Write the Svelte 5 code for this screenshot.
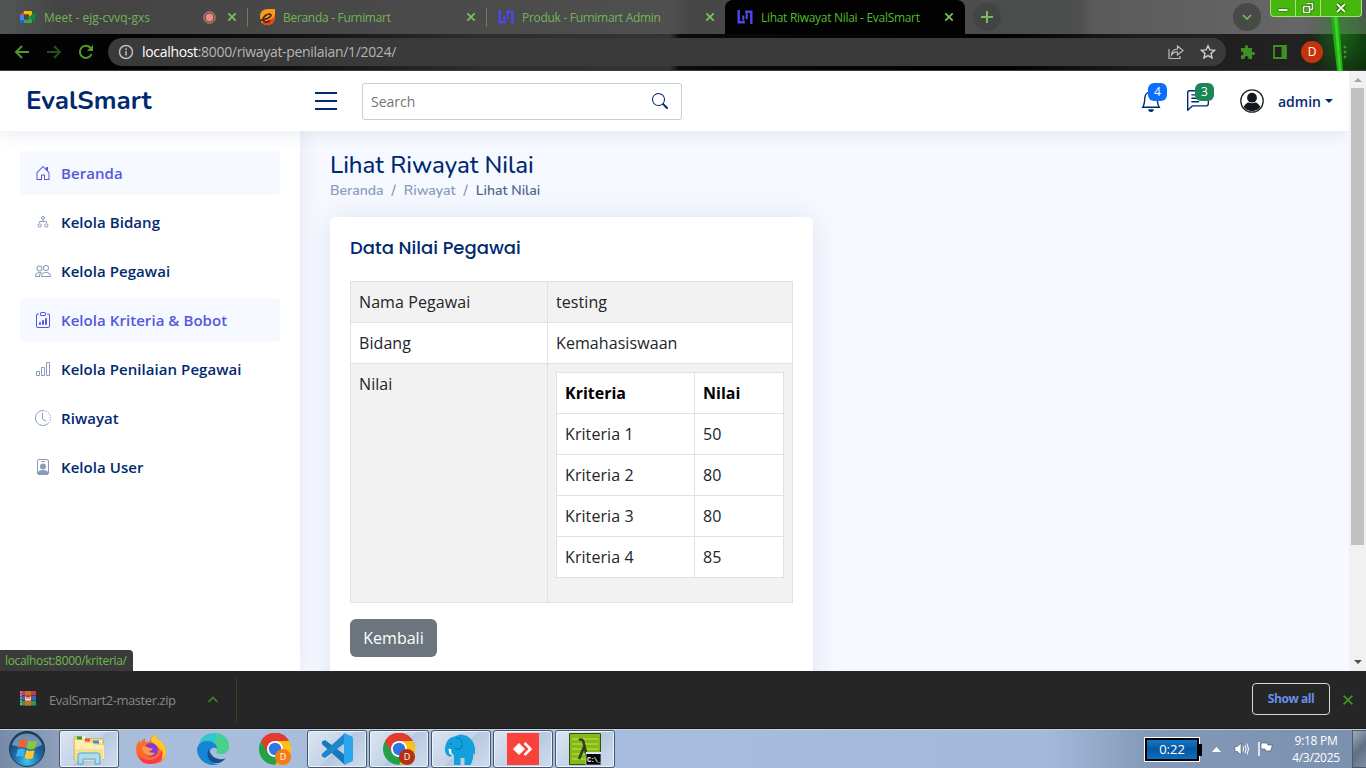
<script>
  const tabs = [
    { title: 'Meet - ejg-cvvq-gxs', icon: 'meet', rec: true, w: 239 },
    { title: 'Beranda - Furnimart', icon: 'furni', w: 239 },
    { title: 'Produk - Furnimart Admin', icon: 'admin', w: 239 },
    { title: 'Lihat Riwayat Nilai - EvalSmart', icon: 'admin', active: true, w: 240 }
  ];
  const menu = [
    { label: 'Beranda', icon: 'house', active: true },
    { label: 'Kelola Bidang', icon: 'diagram' },
    { label: 'Kelola Pegawai', icon: 'people' },
    { label: 'Kelola Kriteria & Bobot', icon: 'clipboard', active: true },
    { label: 'Kelola Penilaian Pegawai', icon: 'bars' },
    { label: 'Riwayat', icon: 'clock' },
    { label: 'Kelola User', icon: 'badge' }
  ];
  const scores = [
    ['Kriteria 1', 50],
    ['Kriteria 2', 80],
    ['Kriteria 3', 80],
    ['Kriteria 4', 85]
  ];
  const tasks = [
    { icon: 'explorer', open: true },
    { icon: 'firefox' },
    { icon: 'edge' },
    { icon: 'chrome', badge: '#f57c14' },
    { icon: 'vscode', open: true },
    { icon: 'chrome', open: true, badge: '#b7300f' },
    { icon: 'elephant', open: true },
    { icon: 'anydesk', open: true },
    { icon: 'lambda', open: true }
  ];
</script>

{#snippet favicon(name)}
  <svg class="fav" viewBox="0 0 16 16">
    {#if name === 'meet'}
      <path d="M0 6l4-4v4z" fill="#ea4335" />
      <path d="M4 2h7q1 0 1 1v3.500L9 9V5.500H4z" fill="#fbbc04" />
      <path d="M0 6h4v5H0z" fill="#4285f4" />
      <path d="M0 11h4v3H1q-1 0-1-1z" fill="#1967d2" />
      <path d="M4 10.500h5V8l3 2.500V13q0 1-1 1H4z" fill="#34a853" />
      <path d="M4 5.500h5v5H4z" fill="#484848" />
      <path d="M9 8l5.200-4.600q.8-.5.800.4v8.400q0 .9-.8.400z" fill="#0b8a3c" />
    {:else if name === 'furni'}
      <path d="M1 8Q1 0 9 0h7v7q0 9-8 9-7 0-7-8z" fill="#f99a1c" />
      <path d="M16 6q0 10-8 10-4 0-6-3 5 1 9-2 4-2 5-5z" fill="#e2441b" />
      <path d="M.5 11.500q5-.5 9-2.500 3-1.700 2.300-3.300Q10 4 6.500 6.500 3 9.500 4.500 12q2 2.500 6.500-.5" fill="none" stroke="#4b251b" stroke-width="1.700" />
    {:else}
      <g fill="none" stroke="#4b49e8" stroke-width="2.400">
        <path d="M1.700 1v12.300H7.800" /><path d="M6.300 6.500v5" stroke-width="2" />
        <path d="M8.200 2.700h6.100V15" /><path d="M9.700 4v6" stroke-width="2" />
      </g>
    {/if}
  </svg>
{/snippet}

{#snippet cross(size, w)}
  <svg width={size} height={size} viewBox="0 0 10 10"><path d="M1.300 1.300l7.400 7.400M8.700 1.300l-7.400 7.400" stroke="currentColor" stroke-width={w} fill="none" /></svg>
{/snippet}

{#snippet navicon(name)}
  <svg class="nav-ico" viewBox="0 0 16 16" fill="currentColor">
    {#if name === 'house'}
      <path d="M8.354 1.146a.5.5 0 0 0-.708 0l-6 6A.5.5 0 0 0 1.500 7.500v7a.5.5 0 0 0 .5.5h4.500a.5.5 0 0 0 .5-.5v-4h2v4a.5.5 0 0 0 .5.5H14a.5.5 0 0 0 .5-.5v-7a.5.5 0 0 0-.146-.354L13 5.793V2.500a.5.5 0 0 0-.5-.5h-1a.5.5 0 0 0-.5.5v1.293L8.354 1.146zM2.500 14V7.707l5.500-5.500 5.500 5.500V14H10v-4a.5.5 0 0 0-.5-.5h-3a.5.5 0 0 0-.5.5v4H2.500z" />
    {:else if name === 'diagram'}
      <g fill="none" stroke="currentColor">
        <circle cx="8" cy="4" r="1.500" /><path d="M8 5.500v2M4.500 9V7.500h7V9" />
        <rect x="3.200" y="10" width="3" height="3" rx=".6" /><rect x="9.800" y="10" width="3" height="3" rx=".6" />
      </g>
    {:else if name === 'people'}
      <path d="M15 14s1 0 1-1-1-4-5-4-5 3-5 4 1 1 1 1h8zm-7.978-1A.261.261 0 0 1 7 12.996c.001-.264.167-1.030.760-1.720C8.312 10.629 9.282 10 11 10c1.717 0 2.687.630 3.240 1.276.593.690.758 1.457.760 1.720l-.008.002a.274.274 0 0 1-.014.002H7.022zM11 7a2 2 0 1 0 0-4 2 2 0 0 0 0 4zm3-2a3 3 0 1 1-6 0 3 3 0 0 1 6 0zM6.936 9.280a5.880 5.880 0 0 0-1.230-.247A7.350 7.350 0 0 0 5 9c-4 0-5 3-5 4 0 .667.333 1 1 1h4.216A2.238 2.238 0 0 1 5 13c0-1.010.377-2.042 1.090-2.904.243-.294.526-.569.846-.816zM4.920 10A5.493 5.493 0 0 0 4 13H1c0-.260.164-1.030.760-1.724.545-.636 1.492-1.256 3.160-1.275zM1.500 5.500a3 3 0 1 1 6 0 3 3 0 0 1-6 0zm3-2a2 2 0 1 0 0 4 2 2 0 0 0 0-4z" />
    {:else if name === 'clipboard'}
      <path d="M4 11a1 1 0 1 1 2 0v1a1 1 0 1 1-2 0v-1zm6-4a1 1 0 1 1 2 0v5a1 1 0 1 1-2 0V7zM7 9a1 1 0 0 1 2 0v3a1 1 0 1 1-2 0V9z" />
      <path d="M4 1.500H3a2 2 0 0 0-2 2V14a2 2 0 0 0 2 2h10a2 2 0 0 0 2-2V3.500a2 2 0 0 0-2-2h-1v1h1a1 1 0 0 1 1 1V14a1 1 0 0 1-1 1H3a1 1 0 0 1-1-1V3.500a1 1 0 0 1 1-1h1v-1z" />
      <path d="M9.500 1a.5.5 0 0 1 .5.5v1a.5.5 0 0 1-.5.5h-3a.5.5 0 0 1-.5-.5v-1a.5.5 0 0 1 .5-.5h3zm-3-1A1.500 1.500 0 0 0 5 1.500v1A1.500 1.500 0 0 0 6.500 4h3A1.500 1.500 0 0 0 11 2.500v-1A1.500 1.500 0 0 0 9.500 0h-3z" />
    {:else if name === 'bars'}
      <path d="M4 11H2v3h2v-3zm5-4H7v7h2V7zm5-5v12h-2V2h2zm-2-1a1 1 0 0 0-1 1v12a1 1 0 0 0 1 1h2a1 1 0 0 0 1-1V2a1 1 0 0 0-1-1h-2zM6 7a1 1 0 0 1 1-1h2a1 1 0 0 1 1 1v7a1 1 0 0 1-1 1H7a1 1 0 0 1-1-1V7zm-5 4a1 1 0 0 1 1-1h2a1 1 0 0 1 1 1v3a1 1 0 0 1-1 1H2a1 1 0 0 1-1-1v-3z" />
    {:else if name === 'clock'}
      <g fill="none" stroke="currentColor">
        <path d="M8 .5a7.500 7.500 0 1 0 5.300 12.800" /><path d="M8 .5a7.500 7.500 0 0 1 5.300 12.800" stroke-dasharray="1.500 1.100" />
        <path d="M7.500 3.500V9l3.500 2" stroke-linecap="round" />
      </g>
    {:else}
      <rect x="2.500" y=".5" width="11" height="15" rx="1.500" fill="none" stroke="currentColor" />
      <path d="M6 2h4v1H6zM8 4.500a3 3 0 1 1 0 6 3 3 0 0 1 0-6zM3 13q1-2 5-2t5 2v2.500H3z" />
    {/if}
  </svg>
{/snippet}

{#snippet appicon(item)}
  <svg class="app-ico" viewBox="0 0 32 32">
    {#if item.icon === 'explorer'}
      <path d="M1 5q0-1.500 1.500-1.500H10l2 2h17q1.500 0 1.500 1.500v20H1z" fill="#f3d67c" stroke="#c8a548" stroke-width=".6" />
      <path d="M4 3.500h5v3H4z" fill="#2f9e3f" /><path d="M9 3.500h3v2H9z" fill="#fff" /><path d="M12 5.500h5v3h-5z" fill="#e35b37" /><path d="M20 7.500h6v3h-6z" fill="#3d8fd6" /><path d="M26 7.500h3v2h-3z" fill="#fff" />
      <path d="M2 7h8l2 3h8l2 2h9v14H2z" fill="#fbeeb0" /><path d="M2 16h28v12H2z" fill="#f6df92" />
      <path d="M5 31v-8.500q0-2.500 2.500-2.500h17q2.500 0 2.500 2.500V31h-5v-5H10v5z" fill="#a9dcf5" stroke="#4e9cc8" stroke-width=".9" />
    {:else if item.icon === 'firefox'}
      <path d="M16 31C7 31 1 25 1 17q0-6 4-10v4q2-4 5-6v4q3-1 5 0 0-5 5-8 1 4 4 6 7 5 7 11 0 13-15 13z" fill="#ff6a2b" />
      <path d="M20 1q1 4 4 6 7 5 7 11 0 6-4 9 1-9-4-13-5-3-7-6 0-4 4-7z" fill="#ffc928" />
      <path d="M3 21q4 6 12 6 10 0 12-11 3 14-12 15Q5 31 3 21z" fill="#ff344f" />
      <circle cx="16" cy="17" r="7" fill="#8a35d4" /><path d="M7 13q5 0 7 2l4 .5q-1 2-4 3 2 2 6 1-2 4-7 3-6-2-6-9.500z" fill="#ff9640" />
    {:else if item.icon === 'edge'}
      <path d="M1 15C2 6 8 0 17 0c9 0 15 6 15 13 0 5-3 8-8 8-4 0-5-1-4-3 1-5-4-9-10-9-4 0-7 2-9 6z" fill="#35c5cf" />
      <path d="M17 0c9 0 15 6 15 13 0 5-3 8-8 8-4 0-5-1-4-3 1-5-1-8-5-9 6-1 7-6 2-9z" fill="#48d18d" />
      <path d="M0 16C1 11 5 8 10 8c6 0 10 3 10 8-3-3-8 0-8 5 0 6 4 10 10 11C9 34 0 26 0 16z" fill="#1683d4" />
      <path d="M12 16q-4 8 3 13 7 4 14-4-3 2-7 1c-6-1-9-5-10-10z" fill="#145090" />
    {:else if item.icon === 'chrome'}
      <circle cx="16" cy="16" r="16" fill="#24a148" /><path d="M16 16L2 8A16 16 0 0 1 30 8z" fill="#e33b2e" />
      <path d="M16 8h14a16 16 0 0 1-14 24l7-12z" fill="#fbc116" /><path d="M2 8l7 12 7-12z" fill="#e33b2e" />
      <circle cx="16" cy="16" r="8" fill="#fff" /><circle cx="16" cy="16" r="6.200" fill="#2e76e8" />
      <circle cx="24" cy="24" r="8" fill={item.badge} />
      <text x="24" y="27.300" text-anchor="middle" class="badge-letter">D</text>
    {:else if item.icon === 'vscode'}
      <path d="M1 8.500l3-1.500L24 22v10L.8 11z" fill="#1479bd" />
      <path d="M1 23.500l3 1.500L24 10V0L.8 21z" fill="#1f86cc" />
      <path d="M23 0l8 3.500q1 .5 1 2v21q0 1.500-1 2L23 32z" fill="#2ba6ee" />
    {:else if item.icon === 'elephant'}
      <path d="M11 3q4-3 11 0 6 3 8 12v7l-1.500-2q0 7-3 12h-6v-7h-4v7H9v-9q-1-3-2-2 0 4-4 2-5-4-2-12Q3 4 11 3z" fill="#13a0dc" />
      <path d="M11 5q7 0 6 8-2 5-7 2" fill="none" stroke="#087cb6" stroke-width="1.100" />
      <path d="M3.500 16l1 5 2.500 1-1-6z" fill="#fff" /><circle cx="6" cy="11" r=".8" fill="#08496e" />
    {:else if item.icon === 'anydesk'}
      <path d="M0 0h32v32H0z" fill="#f9423a" /><path d="M6 16l6-6 6 6-6 6z" fill="#fff" />
      <path d="M17.500 10l6 6-6 6" fill="none" stroke="#fff" stroke-width="2.500" />
    {:else}
      <path d="M.5.5h31v31H.5z" fill="#86b817" stroke="#3a4d16" /><path d="M3 6h26M3 11h26M3 16h26M3 21h26M3 26h13" stroke="#a9d73d" stroke-width="1.500" />
      <path d="M10 7q4-2 5 4l3 13q.5 2 3 1M15 14l-5 12" fill="none" stroke="#333b24" stroke-width="2.600" />
      <path d="M17 20h15v12H17z" fill="#050505" stroke="#d8dfdf" stroke-width=".7" /><path d="M17 19h15v2H17z" fill="#dfe7ea" />
      <text x="18" y="29" class="cmd">C:\_</text>
    {/if}
  </svg>
{/snippet}

<div class="screen">
  <div class="chrome">
    <div class="strip">
      {#each tabs as t}
        <div class="tab" class:active={t.active} style="width:{t.w}px">
          {@render favicon(t.icon)}
          <span class="tab-title">{t.title}</span>
          {#if t.rec}
            <svg class="rec" viewBox="0 0 13 13"><circle cx="6.500" cy="6.500" r="5.600" fill="none" stroke="#ee9084" /><circle cx="6.500" cy="6.500" r="3.900" fill="#f28b82" /></svg>
          {/if}
          <span class="tab-x">{@render cross(10, 1.8)}</span>
        </div>
      {/each}
      <div class="round plus"><svg width="14" height="14" viewBox="0 0 14 14"><path d="M7 1v12M1 7h12" stroke="#78bd5b" stroke-width="2" /></svg></div>
      <div class="round down"><svg width="12" height="12" viewBox="0 0 12 12"><path d="M2 4l4 4 4-4" fill="none" stroke="#78bd5b" stroke-width="1.700" /></svg></div>
      <div class="winctl">
        <span><svg width="12" height="16" viewBox="0 0 12 16"><rect x="1" y="8.500" width="10" height="3" rx="1" fill="#e6f6d7" stroke="#286610" stroke-width=".8" /></svg></span>
        <span><svg width="14" height="16" viewBox="0 0 14 16"><path d="M5.500 3.500h6v6H9M2.500 6.500h6v6h-6z" fill="none" stroke="#23640b" stroke-width="3.200" /><path d="M5.500 3.500h6v6H9M2.500 6.500h6v6h-6z" fill="none" stroke="#e6f6d7" stroke-width="1.700" /></svg></span>
        <span class="wx"><svg width="14" height="16" viewBox="0 0 14 16"><path d="M3 4l8 8M11 4l-8 8" stroke="#23640b" stroke-width="4" /><path d="M3 4l8 8M11 4l-8 8" stroke="#e6f6d7" stroke-width="2.200" /></svg></span>
      </div>
    </div>
    <div class="toolbar">
      <svg class="tb back" viewBox="0 0 16 16"><path d="M15 8H2M8 2L2 8l6 6" fill="none" stroke="#4e9a2e" stroke-width="1.900" /></svg>
      <svg class="tb fwd" viewBox="0 0 16 16"><path d="M1 8h13M8 2l6 6-6 6" fill="none" stroke="#29501b" stroke-width="1.900" /></svg>
      <svg class="tb reload" viewBox="0 0 16 16"><path d="M13.500 10A6 6 0 1 1 12.300 3.800L14 5.500" fill="none" stroke="#4e9a2e" stroke-width="2" /><path d="M15 1v6H9z" fill="#4e9a2e" /></svg>
      <div class="omni">
        <svg width="16" height="16" viewBox="0 0 16 16" fill="none" stroke="#bcbcbc" stroke-width="1.500"><circle cx="8" cy="8" r="6.500" /><path d="M8 7v4.500M8 4.300V6" /></svg>
        <span class="url"><b>localhost</b>:8000/riwayat-penilaian/1/2024/</span>
        <svg class="share" width="16" height="16" viewBox="0 0 16 16" fill="none" stroke="#bdbdbd" stroke-width="1.200"><path d="M1 5v9.500h11V12" /><path d="M3.500 11q0-5.500 6-6V2l5.500 4.500L9.500 11V8q-4-.3-6 3z" /></svg>
        <svg class="star" width="16" height="16" viewBox="0 0 16 16" fill="none" stroke="#d0d0d0" stroke-width="1.400"><path d="M8 1.800l1.900 4.100 4.500.5-3.400 3 1 4.500L8 11.600l-4 2.300 1-4.500-3.400-3 4.500-.5z" /></svg>
      </div>
      <svg class="puzzle" width="16" height="16" viewBox="0 0 16 16"><path d="M1 4h4.200q-.7-3 1.300-3t1.300 3H12v4.200q3-.7 3 1.300t-3 1.300V15H8.500q0-3-2-3t-2 3H1v-3.500q2.500 0 2.500-2T1 7.500z" fill="#3f8f22" /></svg>
      <svg class="panel" width="14" height="14" viewBox="0 0 14 14"><path d="M1 1h12v12H1z" fill="none" stroke="#3f8f22" stroke-width="1.800" /><path d="M8.500 1H13v12H8.500z" fill="#3f8f22" /></svg>
      <span class="avatar-d">D</span>
      <svg class="dots" width="4" height="14" viewBox="0 0 4 14" fill="#3f9422"><circle cx="2" cy="2" r="1.500" /><circle cx="2" cy="7" r="1.500" /><circle cx="2" cy="12" r="1.500" /></svg>
    </div>
    <svg class="beam" viewBox="0 0 66 54"><path d="M31 0h8l4 54h-6z" fill="#1fae12" /><path d="M34 0h3l4 54h-2z" fill="#3ed42c" /></svg>
  </div>

  <div class="view">
    <div class="page">
      <header>
        <span class="logo">EvalSmart</span>
        <svg class="burger" viewBox="0 0 22 18"><path d="M0 1h22M0 9h22M0 17h22" stroke="#012970" stroke-width="2" /></svg>
        <div class="search"><span>Search</span>
          <svg width="16" height="16" viewBox="0 0 16 16" fill="#012970"><path d="M11.742 10.344a6.500 6.500 0 1 0-1.397 1.398h-.001c.030.040.062.078.098.115l3.850 3.850a1 1 0 0 0 1.415-1.414l-3.850-3.850a1.007 1.007 0 0 0-.115-.1zM12 6.500a5.500 5.500 0 1 1-11 0 5.500 5.500 0 0 1 11 0z" /></svg>
        </div>
        <div class="note bell">
          <svg viewBox="0 0 16 16" fill="#012970"><path d="M8 16a2 2 0 0 0 2-2H6a2 2 0 0 0 2 2zM8 1.918l-.797.161A4.002 4.002 0 0 0 4 6c0 .628-.134 2.197-.459 3.742-.160.767-.376 1.566-.663 2.258h10.244c-.287-.692-.502-1.490-.663-2.258C12.134 8.197 12 6.628 12 6a4.002 4.002 0 0 0-3.203-3.920L8 1.917zM14.220 12c.223.447.481.801.780 1H1c.299-.199.557-.553.780-1C2.680 10.200 3 6.880 3 6c0-2.420 1.720-4.440 4.005-4.901a1 1 0 1 1 1.990 0A5.002 5.002 0 0 1 13 6c0 .880.320 4.200 1.220 6z" /></svg>
          <b class="blue">4</b>
        </div>
        <div class="note chat">
          <svg viewBox="0 0 16 16" fill="#012970"><path d="M14 1a1 1 0 0 1 1 1v8a1 1 0 0 1-1 1H4.414A2 2 0 0 0 3 11.586l-2 2V2a1 1 0 0 1 1-1h12zM2 0a2 2 0 0 0-2 2v12.793a.5.5 0 0 0 .854.353l2.853-2.853A1 1 0 0 1 4.414 12H14a2 2 0 0 0 2-2V2a2 2 0 0 0-2-2H2z" /><path d="M3 3.500a.5.5 0 0 1 .5-.5h9a.5.5 0 0 1 0 1h-9a.5.5 0 0 1-.5-.5zM3 6a.5.5 0 0 1 .5-.5h9a.5.5 0 0 1 0 1h-9A.5.5 0 0 1 3 6zm0 2.500a.5.5 0 0 1 .5-.5h5a.5.5 0 0 1 0 1h-5a.5.5 0 0 1-.5-.5z" /></svg>
          <b class="green">3</b>
        </div>
        <svg class="face" viewBox="0 0 24 24"><circle cx="12" cy="12" r="11.200" fill="#fff" stroke="#222" stroke-width="1.300" /><circle cx="12" cy="8.700" r="4.900" fill="#15181c" /><path d="M3.700 18Q6 13.500 9 13.500q3 1.500 6 0 3 0 5.300 4.500A10.300 10.300 0 0 1 3.700 18z" fill="#15181c" /></svg>
        <span class="admin">admin</span><i class="caret"></i>
      </header>
      <div class="body">
        <aside>
          {#each menu as m}
            <div class="item" class:active={m.active}>{@render navicon(m.icon)}<span>{m.label}</span></div>
          {/each}
        </aside>
        <main>
          <h1>Lihat Riwayat Nilai</h1>
          <div class="crumbs"><span>Beranda</span><i>/</i><span>Riwayat</span><i>/</i><span class="cur">Lihat Nilai</span></div>
          <section class="card">
            <h2>Data Nilai Pegawai</h2>
            <table class="outer">
              <tbody>
                <tr class="odd"><td class="k">Nama Pegawai</td><td>testing</td></tr>
                <tr><td class="k">Bidang</td><td>Kemahasiswaan</td></tr>
                <tr class="odd"><td class="k">Nilai</td><td>
                  <table class="inner">
                    <thead><tr><th class="c1">Kriteria</th><th>Nilai</th></tr></thead>
                    <tbody>
                      {#each scores as [k, v]}<tr><td>{k}</td><td>{v}</td></tr>{/each}
                    </tbody>
                  </table>
                </td></tr>
              </tbody>
            </table>
            <button>Kembali</button>
          </section>
        </main>
      </div>
    </div>
    <div class="scroll"><i class="up"></i><div class="thumb"></div><i class="dn"></i></div>
    <div class="status">localhost:8000/kriteria/</div>
  </div>

  <div class="downloads">
    <svg class="rar" viewBox="0 0 16 16"><path d="M0 1h16v4.500H0z" fill="#c23b5c" /><path d="M0 6h16v4.500H0z" fill="#3763bd" /><path d="M0 11h16v4.500H0z" fill="#2f9b48" /><path d="M1 1v14.500" stroke="#e8dbe9" stroke-width=".8" stroke-dasharray="2 1" /><path d="M5 1h6v14.500H5z" fill="#c4722b" /><path d="M4.500 5.500h7v5.500h-7z" fill="#b92619" /><path d="M5.800 6.500v3.300h4.400V6.500M8 7v3" stroke="#fff" stroke-width="1.200" fill="none" /></svg>
    <span class="file">EvalSmart2-master.zip</span>
    <svg class="upch" viewBox="0 0 12 12"><path d="M1.500 8L6 3.500 10.500 8" fill="none" stroke="#3c8524" stroke-width="1.700" /></svg>
    <span class="vline"></span>
    <span class="showall">Show all</span>
    <span class="dx">{@render cross(12, 1.4)}</span>
  </div>

  <div class="taskbar">
    <div class="start">
      <svg width="38" height="38" viewBox="0 0 38 38">
        <defs><radialGradient id="orb" cx=".5" cy=".85" r=".85"><stop offset="0" stop-color="#3fc4ee" /><stop offset=".45" stop-color="#1c6ba6" /><stop offset="1" stop-color="#14395f" /></radialGradient></defs>
        <circle cx="19" cy="19" r="17.500" fill="url(#orb)" stroke="#1c3852" /><path d="M4 15a15.500 15.500 0 0 1 30 0q-7 4-15 3T4 15z" fill="#c5d6e6" opacity=".5" />
        <path d="M12 10q4-2 7 0l-1.500 8q-3-2-7.500 0z" fill="#f0642b" /><path d="M20.500 10.500q4 2 8.500 0L27 18.500q-4 2-8 0z" fill="#8bc63e" />
        <path d="M9.500 19.500q4-2 7.500 0L15.500 27q-3-2-7.500 0z" fill="#3fb2ee" /><path d="M18.500 20q4 2 8 0L25 28q-4 2-8.500 0z" fill="#fdc62b" />
      </svg>
    </div>
    {#each tasks as t}
      <div class="task" class:open={t.open}>{@render appicon(t)}</div>
    {/each}
    <div class="tray">
      <div class="batt">0:22</div>
      <svg class="tri" width="9" height="5" viewBox="0 0 9 5"><path d="M0 5l4.500-5L9 5z" fill="#fff" /></svg>
      <svg class="vol" width="15" height="14" viewBox="0 0 15 14"><path d="M1 4.500h2.500L7 1v12L3.500 9.500H1z" fill="#fff" stroke="#4d5c70" stroke-width=".6" /><path d="M9 4.500q1.500 2.500 0 5M11 3q2.500 4 0 8M13 1.500q3 5.500 0 11" fill="none" stroke="#fff" /></svg>
      <svg class="flag" width="17" height="16" viewBox="0 0 17 16"><path d="M2 1v14" stroke="#fff" stroke-width="1.500" /><path d="M4 2h6l1 2h4.500l-2 6H9L8 8H4z" fill="#fff" stroke="#42506a" stroke-width=".6" /></svg>
      <div class="time"><span>9:18 PM</span><span>4/3/2025</span></div>
      <div class="peek"></div>
    </div>
  </div>
</div>

<style>
  :global(body) { margin: 0; overflow: hidden; }
  .screen, .screen :global(*) { box-sizing: border-box; }
  .screen { width: 1366px; height: 768px; display: flex; flex-direction: column; font-family: 'Open Sans', sans-serif; overflow: hidden; }
  svg { display: block; flex: none; }
  .chrome { height: 71px; position: relative; background: linear-gradient(90deg, #030303 0 120px, #111 300px, #2e2e2e 480px, #333 670px, #0b0b0b 680px, #000 1000px, #1c1c1c 1130px, #222 1300px, #0a2a0a 1366px); border-bottom: 1px solid #3b3b3b; }
  .strip { height: 34px; display: flex; padding-left: 8px; background: linear-gradient(90deg, #515453 0 8px, #444 60px, #4b4b4b 500px, #505050 670px, #464646 690px, #4b4d4c 965px, #4d4f4e 1078px, #5b5b5b 1094px, #666 1300px, #4c534c 1366px); }
  .tab { height: 34px; display: flex; align-items: center; padding-left: 12px; padding-right: 9px; color: #72b458; position: relative; }
  .tab:nth-child(-n+2)::after { content: ''; position: absolute; right: -1px; top: 8px; width: 1px; height: 19px; background: #5a8a48; }
  .tab.active { background: #020202; border-radius: 8px 8px 0 0; color: #55bd2d; padding-right: 10px; }
  .fav { width: 16px; height: 16px; margin-right: 8px; }
  .tab-title { font-size: 12px; letter-spacing: -0.3px; white-space: nowrap; margin-right: auto; }
  .rec { width: 13px; height: 13px; margin-right: 11px; }
  .tab:first-child .tab-title { letter-spacing: -0.02px; }
  .tab-x { color: #78c25a; padding-right: 1px; }
  .round { width: 28px; height: 28px; border-radius: 50%; background: #434544; display: flex; align-items: center; justify-content: center; margin-top: 3px; }
  .plus { margin-left: 8px; }
  .down { margin-left: 232px; background: #484a48; }
  .winctl { margin-left: 9px; display: flex; height: 17px; border: 1px solid #a4e27c; border-top: 0; border-radius: 0 0 4px 4px; background: #46b70c; }
  .winctl span { width: 25px; display: flex; justify-content: center; border-right: 1px solid #a4e27c; }
  .winctl .wx { width: 40px; border: 0; }
  .toolbar { height: 36px; display: flex; align-items: center; position: relative; z-index: 1; }
  .tb { width: 16px; height: 16px; }
  .back { margin-left: 14px; } .fwd { margin-left: 16px; } .reload { margin-left: 16px; }
  .omni { margin-left: 14px; width: 1118px; height: 28px; border-radius: 14px; background: #3a3a3a; display: flex; align-items: center; padding-left: 10px; color: #b5b5b5; font-size: 14px; }
  .url { margin-left: 8px; letter-spacing: -0.32px; position: relative; top: -1px; }
  .url b { font-weight: 400; color: #fff; }
  .share { margin-left: auto; } .star { margin: 0 10px 0 16px; }
  .puzzle { margin-left: 14px; } .panel { margin-left: 17px; }
  .avatar-d { margin-left: 14px; width: 22px; height: 22px; border-radius: 50%; background: #c5330d; color: #fff; font-size: 12px; line-height: 22px; text-align: center; }
  .dots { margin-left: 20px; }
  .beam { position: absolute; right: 0; top: 17px; width: 66px; height: 54px; background: radial-gradient(ellipse 34px 48px at 44px 18px, #22a81e70, transparent); }

  .view { height: 600px; display: flex; position: relative; background: #f6f9ff; }
  .page { width: 1349px; display: flex; flex-direction: column; overflow: hidden; }
  header { height: 60px; flex: none; background: #fff; box-shadow: 0 2px 20px rgba(1, 41, 112, .1); display: flex; align-items: center; position: relative; z-index: 3; color: #012970; }
  .logo { width: 289px; padding-left: 26px; font: 700 26px/60px Nunito, 'Open Sans', sans-serif; }
  .burger { width: 22px; height: 18px; margin-left: 26px; }
  .search { width: 320px; height: 37px; margin: 0 0 0 25px; border: 1px solid #c9cbd6; border-radius: 3px; display: flex; justify-content: space-between; align-items: center; padding: 0 13px 0 8px; font-size: 14px; color: #757575; }
  .note { position: relative; }
  .note svg { width: 22px; height: 22px; }
  .bell { margin-left: 458px; } .chat { margin-left: 25px; }
  .note b { position: absolute; left: 8px; top: -7px; width: 19px; height: 18px; border-radius: 6px; color: #fff; font-weight: 400; font-size: 12px; line-height: 18px; text-align: center; }
  .blue { background: #0d6efd; } .green { background: #198754; }
  .face { width: 24px; height: 24px; margin-left: 31px; }
  .admin { margin-left: 14px; font-size: 14px; font-weight: 600; padding-top: 1px; }
  .caret { margin-left: 4px; border: 4px solid transparent; border-top-color: #012970; border-bottom: 0; }
  .body { flex: 1; display: flex; min-height: 0; }
  aside { width: 300px; flex: none; background: #fff; padding: 20px; box-shadow: 0 0 20px rgba(1, 41, 112, .1); display: flex; flex-direction: column; gap: 5px; position: relative; }
  .item { height: 44px; flex: none; display: flex; align-items: center; padding-left: 15px; border-radius: 4px; font-size: 15px; font-weight: 600; letter-spacing: .06px; color: #012970; white-space: nowrap; }
  .item.active { background: #f6f9ff; color: #5558dc; }
  .nav-ico { width: 16px; height: 16px; margin-right: 10px; color: #899bbd; }
  .active .nav-ico { color: #5558dc; }
  main { padding: 20px 30px 0; flex: 1; }
  h1 { margin: 0; font: 500 24px/29px Nunito, 'Open Sans', sans-serif; color: #012970; white-space: nowrap; }
  .crumbs { height: 21px; margin-bottom: 16px; display: flex; font: 600 14px/21px Nunito, 'Open Sans', sans-serif; color: #899bbd; }
  .crumbs i { font-style: normal; margin: 0 8px; color: #8390a5; }
  .crumbs .cur { color: #51678f; }
  .card { width: 483px; height: 520px; background: #fff; border-radius: 5px; box-shadow: 0 0 30px rgba(1, 41, 112, .1); padding: 0 20px; }
  h2 { margin: 0; padding: 20px 0 22px; font: 500 18px/22px Poppins, Inter, sans-serif; color: #012970; }
  table { border-collapse: collapse; font-size: 16px; line-height: 24px; color: #212529; table-layout: fixed; letter-spacing: .08px; }
  td, th { border: 1px solid #dee2e6; padding: 8px; text-align: left; vertical-align: top; }
  .outer { width: 443px; }
  .k { width: 197px; }
  .odd > td { background: #f2f2f2; }
  .inner { width: 228px; background: #fff; color: #212529; margin-bottom: 16px; }
  .c1 { width: 138px; }
  th { font-weight: 700; color: #000; letter-spacing: 0; }
  button { display: block; margin-top: 16px; width: 87px; height: 38px; border: 0; border-radius: 6px; background: #6c757d; color: #fff; font: 400 16px 'Open Sans', sans-serif; padding: 0; }
  .scroll { width: 17px; background: #f1f1f1; display: flex; flex-direction: column; align-items: center; }
  .up, .dn { border: 4px solid transparent; }
  .up { border-bottom-color: #a3a3a3; border-top: 0; margin-top: 7px; }
  .dn { border-top-color: #505050; border-bottom: 0; margin-top: auto; margin-bottom: 7px; }
  .thumb { margin-top: 6px; width: 13px; height: 457px; background: #c1c1c1; }
  .status { position: absolute; left: 0; bottom: 0; width: 133px; height: 21px; z-index: 4; background: #3a3a3a; border-radius: 0 4px 0 0; color: #6cbb4e; font-size: 12px; line-height: 22px; padding-left: 5px; letter-spacing: -0.33px; white-space: nowrap; }

  .downloads { height: 58px; background: #262626; display: flex; align-items: center; border-bottom: 1px solid #191919; }
  .rar { width: 16px; height: 16px; margin: 0 0 3px 20px; }
  .file { width: 146px; margin-left: 13px; margin-top: 1px; font-size: 13px; color: #878787; letter-spacing: -0.43px; white-space: nowrap; }
  .upch { width: 12px; height: 12px; margin-left: 12px; }
  .vline { margin-left: 17px; width: 1px; height: 44px; background: #2d4a24; }
  .showall { margin-left: auto; width: 78px; height: 32px; border: 1px solid #d8d8d8; border-radius: 4px; color: #6690ea; font-size: 12px; font-weight: 700; line-height: 30px; text-align: center; letter-spacing: -.45px; margin-bottom: 2px; }
  .dx { color: #3f9422; margin: 0 12px; }

  .taskbar { height: 39px; display: flex; align-items: center; background: linear-gradient(90deg, #778ba9 0, #8d9fb9 58px, #a9bddb 120px, #a7bddd 620px, #a2b9d9 1050px, #8499b8 1150px, #7b8fae 1366px); border-top: 1px solid #c9d3df; }
  .start { width: 59px; padding-left: 8px; }
  .task { width: 60px; height: 38px; margin-right: 2px; display: flex; align-items: center; justify-content: center; }
  .task.open { border: 1px solid #46566c; border-radius: 3px; background: linear-gradient(135deg, #dbe5f1, #c4d3e7 50%, #b6c8e0 51%, #cfdced); box-shadow: inset 0 0 0 1px #edf3fa; }
  .app-ico { width: 32px; height: 32px; }
  .app-ico .badge-letter { font: 9px 'Open Sans', sans-serif; fill: #fff; }
  .app-ico .cmd { font: 700 7px 'Liberation Mono', monospace; fill: #fff; letter-spacing: -.8px; }
  .tray { margin-left: auto; height: 38px; display: flex; align-items: center; }
  .batt { width: 54px; height: 23px; border: 2px solid #000; outline: 1px solid #fff; background: linear-gradient(#1276c4, #0858a0 50%, #0a6fc0); color: #fff; font-size: 13px; line-height: 19px; text-align: center; position: relative; }
  .batt::after { content: ''; position: absolute; right: -5px; top: 4px; width: 4px; height: 12px; background: #000; }
  .tri { margin-left: 13px; } .vol { margin-left: 13px; } .flag { margin-left: 8px; }
  .time { width: 60px; margin-left: 12px; display: flex; flex-direction: column; align-items: center; color: #fff; font-size: 12px; line-height: 17px; letter-spacing: -0.3px; }
  .peek { width: 14px; height: 38px; margin-left: 6px; border: 1px solid #4a586b; border-right: 0; background: linear-gradient(135deg, #a0adbe, #5f6f83 50%, #7d8da2); }
</style>
